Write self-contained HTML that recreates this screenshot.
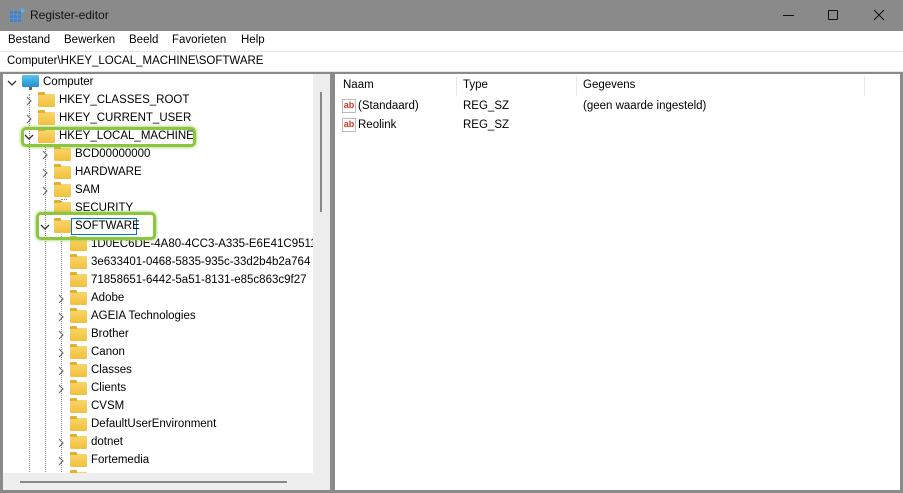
<!DOCTYPE html>
<html><head><style>
*{margin:0;padding:0;box-sizing:border-box}
body{width:903px;height:493px;position:relative;overflow:hidden;background:#8a8a8a;font-family:"Liberation Sans",sans-serif;font-size:11.5px;color:#000}
.a{position:absolute}
.row{position:absolute;height:18px;line-height:18px;white-space:nowrap}
.fd{position:absolute;width:17px;height:13px;top:3px;background:linear-gradient(#f8d56a,#f2c03c);border-radius:1px}
.fd:before{content:"";position:absolute;left:0;top:-2px;width:7px;height:3px;background:#e3ad2d;border-radius:1px 1px 0 0}
.dv{position:absolute;border-left:1px dotted #888}
</style></head><body>
<div class="a" style="left:10px;top:8px;width:15px;height:15px">
<svg width="15" height="15"><g fill="#2a8ae0"><rect x="0" y="3" width="3" height="3"/><rect x="4" y="3" width="3" height="3"/><rect x="8" y="3" width="3" height="3"/><rect x="0" y="7" width="3" height="3"/><rect x="4" y="7" width="3" height="3"/><rect x="8" y="7" width="3" height="3"/><rect x="0" y="11" width="3" height="3"/><rect x="4" y="11" width="3" height="3"/><rect x="8" y="11" width="3" height="3"/></g><circle cx="12.5" cy="2.5" r="2" fill="#5ab0f0"/></svg></div>
<div class="a" style="left:30px;top:8px;font-size:12px;color:#111">Register-editor</div>
<div class="a" style="left:783px;top:15px;width:11px;border-top:1px solid #111"></div>
<div class="a" style="left:828px;top:10px;width:10px;height:10px;border:1px solid #111;border-radius:1px"></div>
<svg class="a" style="left:873px;top:9px" width="12" height="12"><path d="M1 1L11 11M11 1L1 11" stroke="#111" stroke-width="1"/></svg>
<div class="a" style="left:0;top:31px;width:903px;height:20px;background:#fff"></div>
<div class="a" style="left:8px;top:34px">Bestand</div>
<div class="a" style="left:64px;top:34px">Bewerken</div>
<div class="a" style="left:129px;top:34px">Beeld</div>
<div class="a" style="left:172px;top:34px">Favorieten</div>
<div class="a" style="left:241px;top:34px">Help</div>
<div class="a" style="left:0;top:51px;width:903px;height:21px;background:#fff;border-top:1px solid #e6e6e6;border-bottom:1px solid #e6e6e6"></div>
<div class="a" style="left:7px;top:55px">Computer\HKEY_LOCAL_MACHINE\SOFTWARE</div>
<div class="a" style="left:3px;top:74px;width:327px;height:416px;background:#eee"></div>
<div class="a" style="left:3px;top:74px;width:310px;height:399px;background:#fff"></div>
<div class="a" style="left:320px;top:92px;width:2px;height:120px;background:#888"></div>
<div class="a" style="left:20px;top:481px;width:267px;height:2px;background:#888"></div>
<div class="a" style="left:335px;top:74px;width:565px;height:416px;background:#fff"></div>
<div class="a" style="left:456px;top:76px;height:20px;border-left:1px solid #e8e8e8"></div>
<div class="a" style="left:576px;top:76px;height:20px;border-left:1px solid #e8e8e8"></div>
<div class="a" style="left:864px;top:76px;height:20px;border-left:1px solid #e8e8e8"></div>
<div class="a" style="left:343px;top:79px">Naam</div>
<div class="a" style="left:463px;top:79px">Type</div>
<div class="a" style="left:583px;top:79px">Gegevens</div>
<div class="a" style="left:342px;top:99px;width:14px;height:14px;border:1px solid #bbb;background:#fff;color:#d5381c;font-size:9px;font-weight:bold;line-height:10px;text-align:center">ab</div>
<div class="a" style="left:358px;top:100px">(Standaard)</div>
<div class="a" style="left:463px;top:100px">REG_SZ</div>
<div class="a" style="left:583px;top:100px">(geen waarde ingesteld)</div>
<div class="a" style="left:342px;top:118px;width:14px;height:14px;border:1px solid #bbb;background:#fff;color:#d5381c;font-size:9px;font-weight:bold;line-height:10px;text-align:center">ab</div>
<div class="a" style="left:358px;top:119px">Reolink</div>
<div class="a" style="left:463px;top:119px">REG_SZ</div>

<div class="a" style="left:0;top:0;width:313px;height:473px;overflow:hidden">
<div class="dv" style="left:29px;top:94px;height:400px"></div>
<div class="dv" style="left:45px;top:146px;height:340px"></div>
<div class="dv" style="left:61px;top:236px;height:240px"></div>
<div class="dv" style="left:61px;top:199px;height:9px;border-top:1px dotted #888;width:6px"></div>
<svg class="a" style="left:7px;top:78px" width="10" height="10"><path d="M1 3L5 7L9 3" stroke="#333" fill="none" stroke-width="1.3"/></svg>
<div class="a" style="left:22px;top:75px;width:17px;height:12px;background:linear-gradient(#5cc4f0,#1e8fd0);border-radius:1px"></div>
<div class="a" style="left:29px;top:87px;width:3px;height:3px;background:#666"></div>
<div class="row" style="left:43px;top:73px">Computer</div>
<div class="a" style="left:71px;top:218px;width:66px;height:17px;border:1px solid #0078d7;background:#fff"></div>

<svg class="a" style="left:24px;top:96px" width="10" height="10"><path d="M3 1L7 5L3 9" stroke="#666" fill="none"/></svg>
<div class="fd" style="left:38px;top:94px"></div><div class="row" style="left:59px;top:91px">HKEY_CLASSES_ROOT</div>
<svg class="a" style="left:24px;top:114px" width="10" height="10"><path d="M3 1L7 5L3 9" stroke="#666" fill="none"/></svg>
<div class="fd" style="left:38px;top:112px"></div><div class="row" style="left:59px;top:109px">HKEY_CURRENT_USER</div>
<svg class="a" style="left:24px;top:132px" width="10" height="10"><path d="M1 3L5 7L9 3" stroke="#333" fill="none" stroke-width="1.3"/></svg>
<div class="fd" style="left:38px;top:130px"></div><div class="row" style="left:59px;top:127px">HKEY_LOCAL_MACHINE</div>
<svg class="a" style="left:40px;top:150px" width="10" height="10"><path d="M3 1L7 5L3 9" stroke="#666" fill="none"/></svg>
<div class="fd" style="left:54px;top:148px"></div><div class="row" style="left:75px;top:145px">BCD00000000</div>
<svg class="a" style="left:40px;top:168px" width="10" height="10"><path d="M3 1L7 5L3 9" stroke="#666" fill="none"/></svg>
<div class="fd" style="left:54px;top:166px"></div><div class="row" style="left:75px;top:163px">HARDWARE</div>
<svg class="a" style="left:40px;top:186px" width="10" height="10"><path d="M3 1L7 5L3 9" stroke="#666" fill="none"/></svg>
<div class="fd" style="left:54px;top:184px"></div><div class="row" style="left:75px;top:181px">SAM</div>
<div class="fd" style="left:54px;top:202px"></div><div class="row" style="left:75px;top:199px">SECURITY</div>
<svg class="a" style="left:40px;top:222px" width="10" height="10"><path d="M1 3L5 7L9 3" stroke="#333" fill="none" stroke-width="1.3"/></svg>
<div class="fd" style="left:54px;top:220px"></div><div class="row" style="left:75px;top:217px">SOFTWARE</div>
<div class="fd" style="left:70px;top:238px"></div><div class="row" style="left:91px;top:235px">1D0EC6DE-4A80-4CC3-A335-E6E41C95119</div>
<div class="fd" style="left:70px;top:256px"></div><div class="row" style="left:91px;top:253px">3e633401-0468-5835-935c-33d2b4b2a764</div>
<div class="fd" style="left:70px;top:274px"></div><div class="row" style="left:91px;top:271px">71858651-6442-5a51-8131-e85c863c9f27</div>
<svg class="a" style="left:56px;top:294px" width="10" height="10"><path d="M3 1L7 5L3 9" stroke="#666" fill="none"/></svg>
<div class="fd" style="left:70px;top:292px"></div><div class="row" style="left:91px;top:289px">Adobe</div>
<svg class="a" style="left:56px;top:312px" width="10" height="10"><path d="M3 1L7 5L3 9" stroke="#666" fill="none"/></svg>
<div class="fd" style="left:70px;top:310px"></div><div class="row" style="left:91px;top:307px">AGEIA Technologies</div>
<svg class="a" style="left:56px;top:330px" width="10" height="10"><path d="M3 1L7 5L3 9" stroke="#666" fill="none"/></svg>
<div class="fd" style="left:70px;top:328px"></div><div class="row" style="left:91px;top:325px">Brother</div>
<svg class="a" style="left:56px;top:348px" width="10" height="10"><path d="M3 1L7 5L3 9" stroke="#666" fill="none"/></svg>
<div class="fd" style="left:70px;top:346px"></div><div class="row" style="left:91px;top:343px">Canon</div>
<svg class="a" style="left:56px;top:366px" width="10" height="10"><path d="M3 1L7 5L3 9" stroke="#666" fill="none"/></svg>
<div class="fd" style="left:70px;top:364px"></div><div class="row" style="left:91px;top:361px">Classes</div>
<svg class="a" style="left:56px;top:384px" width="10" height="10"><path d="M3 1L7 5L3 9" stroke="#666" fill="none"/></svg>
<div class="fd" style="left:70px;top:382px"></div><div class="row" style="left:91px;top:379px">Clients</div>
<div class="fd" style="left:70px;top:400px"></div><div class="row" style="left:91px;top:397px">CVSM</div>
<div class="fd" style="left:70px;top:418px"></div><div class="row" style="left:91px;top:415px">DefaultUserEnvironment</div>
<svg class="a" style="left:56px;top:438px" width="10" height="10"><path d="M3 1L7 5L3 9" stroke="#666" fill="none"/></svg>
<div class="fd" style="left:70px;top:436px"></div><div class="row" style="left:91px;top:433px">dotnet</div>
<svg class="a" style="left:56px;top:456px" width="10" height="10"><path d="M3 1L7 5L3 9" stroke="#666" fill="none"/></svg>
<div class="fd" style="left:70px;top:454px"></div><div class="row" style="left:91px;top:451px">Fortemedia</div>
<div class="fd" style="left:70px;top:472px"></div>
</div>
<div class="a" style="left:21px;top:127px;width:175px;height:20px;border:3px solid #8cc63f;border-radius:5px;box-shadow:0 0 3px #8cc63f"></div>
<div class="a" style="left:36px;top:212px;width:120px;height:28px;border:3px solid #8cc63f;border-radius:5px;box-shadow:0 0 3px #8cc63f"></div>
<div class="a" style="left:0;top:490px;width:903px;height:3px;background:#8a8a8a"></div>
</body></html>
